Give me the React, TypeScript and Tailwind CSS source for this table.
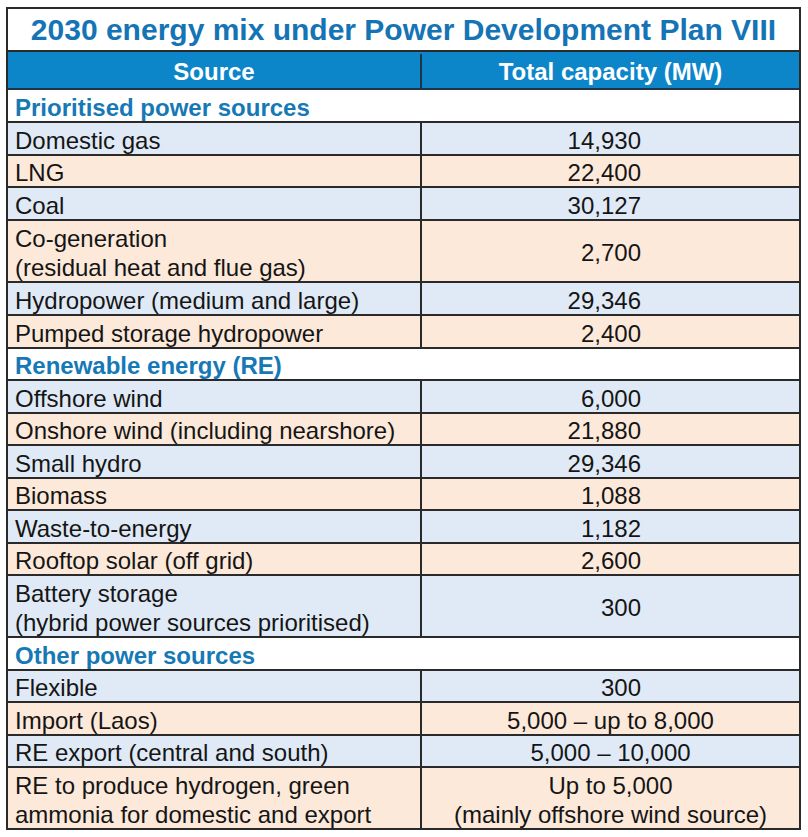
import React from "react";

type Row =
  | { kind: "section"; label: string; h: number }
  | { kind: "data"; label: string[]; value: string[]; h: number; bg: "blue" | "peach"; align: "num" | "center" };

const rows: Row[] = [
  { kind: "section", label: "Prioritised power sources", h: 33 },
  { kind: "data", label: ["Domestic gas"], value: ["14,930"], h: 33, bg: "blue", align: "num" },
  { kind: "data", label: ["LNG"], value: ["22,400"], h: 32, bg: "peach", align: "num" },
  { kind: "data", label: ["Coal"], value: ["30,127"], h: 33, bg: "blue", align: "num" },
  { kind: "data", label: ["Co-generation", "(residual heat and flue gas)"], value: ["2,700"], h: 62, bg: "peach", align: "num" },
  { kind: "data", label: ["Hydropower (medium and large)"], value: ["29,346"], h: 33, bg: "blue", align: "num" },
  { kind: "data", label: ["Pumped storage hydropower"], value: ["2,400"], h: 33, bg: "peach", align: "num" },
  { kind: "section", label: "Renewable energy (RE)", h: 32 },
  { kind: "data", label: ["Offshore wind"], value: ["6,000"], h: 33, bg: "blue", align: "num" },
  { kind: "data", label: ["Onshore wind (including nearshore)"], value: ["21,880"], h: 32, bg: "peach", align: "num" },
  { kind: "data", label: ["Small hydro"], value: ["29,346"], h: 33, bg: "blue", align: "num" },
  { kind: "data", label: ["Biomass"], value: ["1,088"], h: 32, bg: "peach", align: "num" },
  { kind: "data", label: ["Waste-to-energy"], value: ["1,182"], h: 33, bg: "blue", align: "num" },
  { kind: "data", label: ["Rooftop solar (off grid)"], value: ["2,600"], h: 32, bg: "peach", align: "num" },
  { kind: "data", label: ["Battery storage", "(hybrid power sources prioritised)"], value: ["300"], h: 62, bg: "blue", align: "num" },
  { kind: "section", label: "Other power sources", h: 33 },
  { kind: "data", label: ["Flexible"], value: ["300"], h: 32, bg: "blue", align: "num" },
  { kind: "data", label: ["Import (Laos)"], value: ["5,000 – up to 8,000"], h: 33, bg: "peach", align: "center" },
  { kind: "data", label: ["RE export (central and south)"], value: ["5,000 – 10,000"], h: 32, bg: "blue", align: "center" },
  {
    kind: "data",
    label: ["RE to produce hydrogen, green", "ammonia for domestic and export"],
    value: ["Up to 5,000", "(mainly offshore wind source)"],
    h: 60,
    bg: "peach",
    align: "center",
  },
];

export default function App() {
  return (
    <div className="w-[808px] h-[837px] bg-white pt-[7px] pl-[6px]" style={{ fontFamily: '"Liberation Sans", Arial, sans-serif' }}>
      <div className="w-[795px] border-2 border-[#2a2a2a] text-[24px] leading-[29px] text-[#151515]">
        <div className="h-[43px] border-b-2 border-[#2a2a2a] flex items-center justify-center text-[30px] font-bold text-[#1574b5]">
          2030 energy mix under Power Development Plan VIII
        </div>
        <div className="h-[38px] border-b-2 border-[#1f3547] flex bg-[#0c86c9] text-white font-bold pt-[2px]">
          <div className="w-[414px] border-r-2 border-[#1f3547] flex items-center justify-center">Source</div>
          <div className="flex-1 flex items-center justify-center">Total capacity (MW)</div>
        </div>
        {rows.map((r, i) => {
          const last = i === rows.length - 1;
          const bb = last ? "" : "border-b-2 border-[#2a2a2a]";
          if (r.kind === "section") {
            return (
              <div
                key={i}
                className={`${bb} bg-white flex items-center pl-[7px] pt-[3px] font-bold text-[#1679b6]`}
                style={{ height: r.h }}
              >
                {r.label}
              </div>
            );
          }
          const bg = r.bg === "blue" ? "bg-[#e0eaf6]" : "bg-[#fce9da]";
          return (
            <div key={i} className={`${bb} ${bg} flex`} style={{ height: r.h }}>
              <div className="w-[414px] border-r-2 border-[#2a2a2a] flex flex-col justify-center pl-[7px] pt-[3px]">
                {r.label.map((l, j) => (
                  <div key={j}>{l}</div>
                ))}
              </div>
              <div
                className={
                  r.align === "num"
                    ? "flex-1 flex flex-col justify-center text-right pr-[158px] pt-[3px]"
                    : "flex-1 flex flex-col justify-center text-center pt-[3px]"
                }
              >
                {r.value.map((v, j) => (
                  <div key={j}>{v}</div>
                ))}
              </div>
            </div>
          );
        })}
      </div>
    </div>
  );
}
